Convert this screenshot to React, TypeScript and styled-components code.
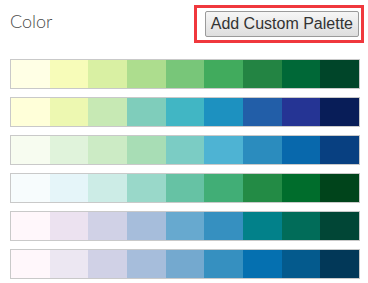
import React from 'react';
import styled, { createGlobalStyle } from 'styled-components';

const GlobalStyle = createGlobalStyle`
  html, body {
    margin: 0;
    padding: 0;
    background: #ffffff;
  }
`;

const Page = styled.div`
  width: 368px;
  box-sizing: border-box;
  padding: 5px 4px 0 10px;
`;

const Header = styled.div`
  display: flex;
  justify-content: space-between;
  align-items: flex-start;
  height: 38px;
  margin-bottom: 16px;
`;

const Title = styled.div`
  font-family: Lato, "Open Sans", sans-serif;
  font-weight: 300;
  font-size: 18px;
  color: #4c4c4c;
  margin-top: 5px;
`;

const Highlight = styled.div`
  border: 3px solid #f0383d;
  padding: 3px 2px 3px 8px;
  display: flex;
`;

const Button = styled.button`
  font-family: "Liberation Sans", Arial, sans-serif;
  font-size: 16px;
  color: #333;
  height: 26px;
  padding: 0 5px;
  border: 1px solid #9a9a9a;
  border-radius: 2px;
  background: linear-gradient(#f6f6f6, #dedede);
  cursor: pointer;
`;

const PaletteList = styled.div`
  display: flex;
  flex-direction: column;
  gap: 8px;
  width: 350px;
`;

const Palette = styled.div`
  display: flex;
  height: 28px;
  border: 1px solid #c9c9c9;
`;

const Swatch = styled.div<{ $color: string }>`
  flex: 1;
  background: ${p => p.$color};
`;

const palettes: string[][] = [
  ['#ffffe5', '#f7fcb9', '#d9f0a3', '#addd8e', '#78c679', '#41ab5d', '#238443', '#006837', '#004529'],
  ['#ffffd9', '#edf8b1', '#c7e9b4', '#7fcdbb', '#41b6c4', '#1d91c0', '#225ea8', '#253494', '#081d58'],
  ['#f7fcf0', '#e0f3db', '#ccebc5', '#a8ddb5', '#7bccc4', '#4eb3d3', '#2b8cbe', '#0868ac', '#084081'],
  ['#f7fcfd', '#e5f5f9', '#ccece6', '#99d8c9', '#66c2a4', '#41ae76', '#238b45', '#006d2c', '#00441b'],
  ['#fff7fb', '#ece2f0', '#d0d1e6', '#a6bddb', '#67a9cf', '#3690c0', '#02818a', '#016c59', '#014636'],
  ['#fff7fb', '#ece7f2', '#d0d1e6', '#a6bddb', '#74a9cf', '#3690c0', '#0570b0', '#045a8d', '#023858'],
];

export default function App() {
  return (
    <>
      <GlobalStyle />
      <Page>
        <Header>
          <Title>Color</Title>
          <Highlight>
            <Button>Add Custom Palette</Button>
          </Highlight>
        </Header>
        <PaletteList>
          {palettes.map((colors, i) => (
            <Palette key={i}>
              {colors.map(c => (
                <Swatch key={c} $color={c} />
              ))}
            </Palette>
          ))}
        </PaletteList>
      </Page>
    </>
  );
}
